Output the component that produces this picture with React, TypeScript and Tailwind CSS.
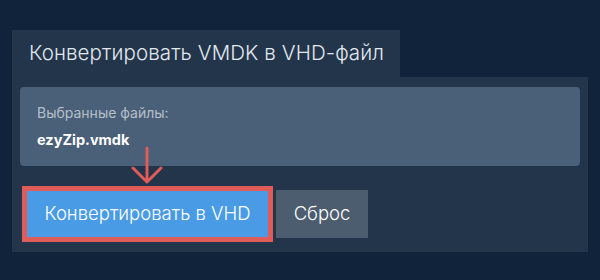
export default function App() {
  return (
    <div
      className="w-[600px] h-[280px] bg-[#10233a] pt-[30px] px-3"
      style={{ fontFamily: 'Inter, "Noto Sans", sans-serif' }}
    >
      <div className="w-[388px] h-[47px] bg-[#22354b] flex items-center pl-[17px]">
        <h1 className="text-[20.5px] font-light text-[#e2e8ee] tracking-[0.1px]">Конвертировать VMDK в VHD-файл</h1>
      </div>
      <div className="w-[576px] bg-[#22354b] px-2 pt-[10px] pb-[10px]">
        <div className="h-[79px] rounded bg-[#4a5f78] pl-[17px] pt-[18px]">
          <div className="text-[14px] text-[#b5c0cb] leading-4">Выбранные файлы:</div>
          <div className="mt-[9px] text-[14.5px] font-bold text-white leading-5">ezyZip.vmdk</div>
        </div>
        <div className="relative flex items-center gap-[3px] mt-[20px]">
          <svg
            className="absolute left-[111px] -top-[40px] z-10"
            width="32"
            height="40"
            viewBox="0 0 32 40"
            fill="none"
            stroke="#e05c59"
            strokeWidth="3"
            strokeLinecap="round"
            strokeLinejoin="round"
          >
            <path d="M16 2 V36 M2 22 L16 36 L30 22" />
          </svg>
          <div className="border-[5px] border-[#e05c59] ml-[2px]">
            <button className="w-[241px] h-[46px] bg-[#4a9be6] text-white text-[18.5px] font-light">
              Конвертировать в VHD
            </button>
          </div>
          <button className="w-[92px] h-[48px] bg-[#4b5d6f] text-white text-[18.5px] font-light">Сброс</button>
        </div>
      </div>
    </div>
  );
}
